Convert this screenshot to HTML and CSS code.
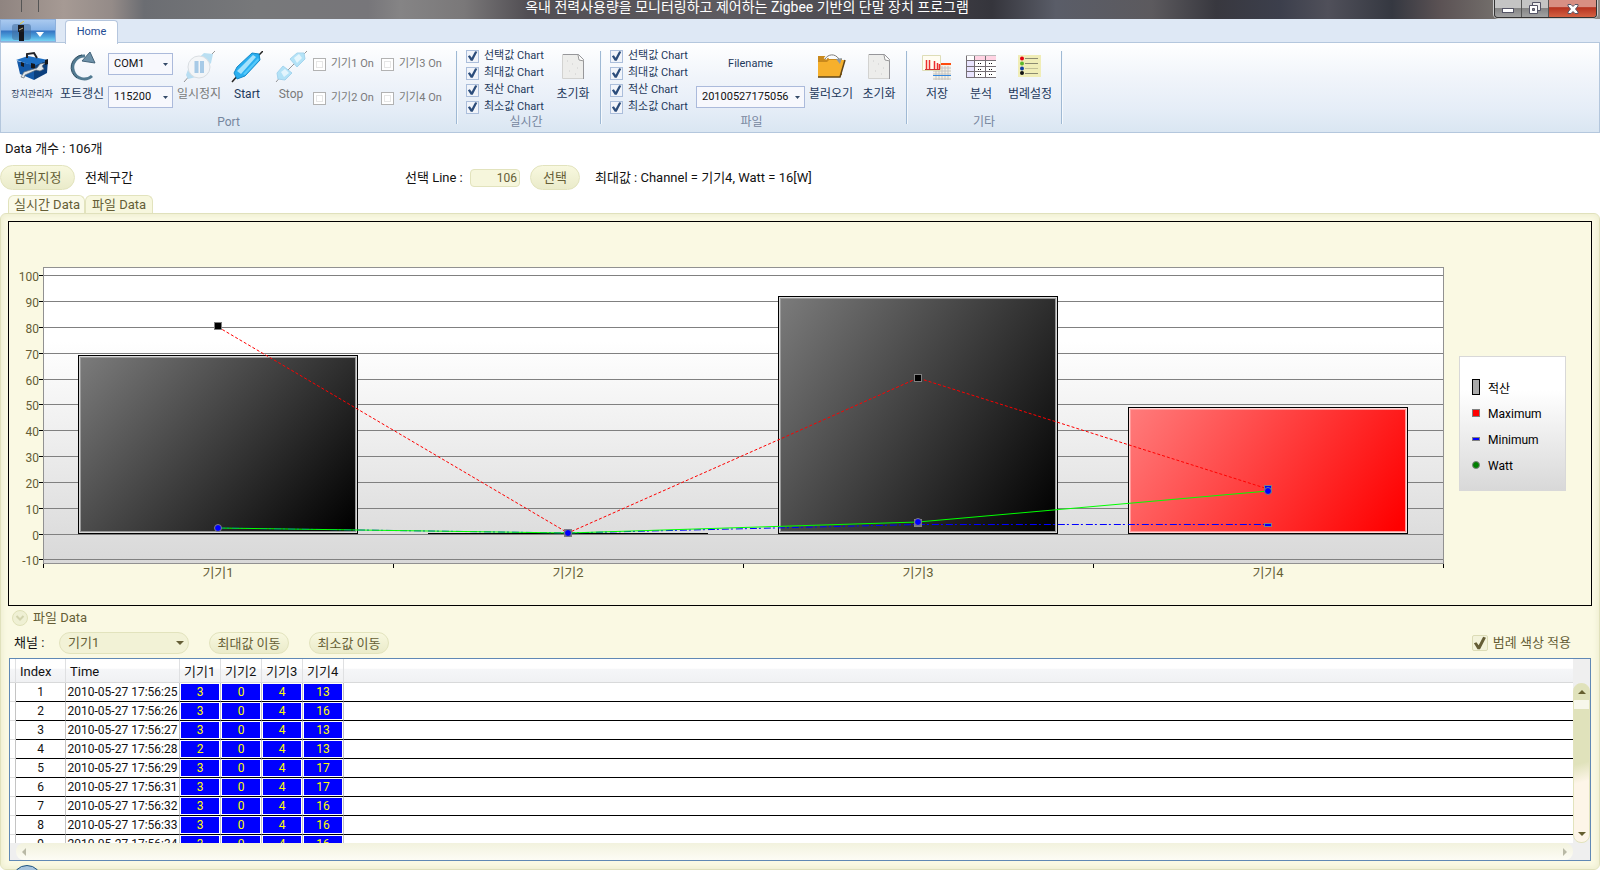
FILE: index.html
```html
<!DOCTYPE html>
<html lang="ko">
<head>
<meta charset="utf-8">
<title>옥내 전력사용량을 모니터링하고 제어하는 Zigbee 기반의 단말 장치 프로그램</title>
<link rel="stylesheet" href="styles.css">
</head>
<body>
<header class="titlebar">
  <span class="title-mark"></span>
  <h1 class="title">옥내 전력사용량을 모니터링하고 제어하는 Zigbee 기반의 단말 장치 프로그램</h1>
  <div class="win-buttons">
    <button class="win-btn" aria-label="최소화"><svg width="12" height="12"><rect x=".5" y="5.5" width="11" height="4" fill="#fff" stroke="#555566"/></svg></button>
    <button class="win-btn" aria-label="이전 크기로"><svg width="12" height="13"><path d="M3.500.5h8v8h-8z" fill="#eee" stroke="#555566"/><path d="M.5 3.500h8v8h-8z" fill="#fff" stroke="#555566"/><path d="M3.500 6.500h2v2h-2z" fill="#888" stroke="#555566"/></svg></button>
    <button class="win-btn win-close" aria-label="닫기"><svg width="12" height="12"><path d="M1 1.500h3l2 2 2-2h3v1.500L8.500 6l2.500 3v1.500H8l-2-2-2 2H1V9l2.500-3L1 3z" fill="#fff" stroke="#555566"/></svg></button>
  </div>
</header>

<nav class="tabstrip">
  <button class="app-btn" aria-label="응용 프로그램 메뉴">
    <svg width="19" height="20"><rect y="3" width="19" height="16" rx="3" fill="#456f9f" opacity=".55"/><path d="M8 3l4-3" stroke="#e3c93e"/><rect x="6" y="4" width="6" height="7" fill="#1c1c20"/><path d="M7 9l4-2" stroke="#b9b184"/><rect x="7" y="11" width="5" height="9" fill="#15151b"/></svg>
    <svg class="app-arrow" width="8" height="5"><path d="M0 0h8L4 5z" fill="#fff"/></svg>
  </button>
  <button class="home-tab">Home</button>
</nav>

<section class="ribbon">
  <div class="group">
    <div class="items">
      <button class="rb w50"><svg class="ico" viewBox="0 0 32 32"><path d="M1 10l17 4v15L4 23z" fill="#1459a8"/><path d="M18 14l14-5-1 13-13 7z" fill="#0b3f7d"/><path d="M0 9l12-4 20 4-14 6z" fill="#1d6fc4"/><path d="M11 7V3l7-1 3 5" fill="none" stroke="#202228" stroke-width="2"/><path d="M5 11l3 1v4l-3-1zM15 12l4 1v5l-4-1zM29 9l3-1v5l-3 1z" fill="#15171c"/><path d="M5 26l3-5 13-4 3-4 5-1-3 3 2 3-4 2-4-1-11 5-1 3z" fill="#dfe5ea" stroke="#66717c" stroke-width=".7"/></svg><span class="small">장치관리자</span></button>
      <button class="rb w50"><svg class="ico" viewBox="0 0 32 32"><path d="M19 5A11.500 11.500 0 1 0 26 25" fill="none" stroke="#527a91" stroke-width="3"/><path d="M16 4A12.500 12.500 0 0 0 11 27" fill="none" stroke="#2e4c60" stroke-width="1"/><path d="M24 1l5 11-13-2z" fill="#6d91a8" stroke="#44647a"/></svg><span>포트갱신</span></button>
      <div class="combos w65">
        <select aria-label="포트"><option>COM1</option></select>
        <select aria-label="통신 속도"><option>115200</option></select>
      </div>
      <button class="rb w50 off" disabled><svg class="ico" viewBox="0 0 32 32"><path d="M1 31l7-8M25 7l7-7" stroke="#777"/><path d="M3 24l3-8L21 2l9 1-2 9-15 14-8 2z" fill="#a5d6ef"/><circle cx="16" cy="16" r="11" fill="#f3f5f7" stroke="#cfd5da"/><path d="M13.500 10v12M19 10v12" stroke="#8dbbe0" stroke-width="4"/></svg><span>일시정지</span></button>
      <button class="rb w46"><svg class="ico" viewBox="0 0 32 32"><path d="M1 31l7-8M25 7l7-7" stroke="#222" stroke-width="1.500"/><path d="M3 22l3-6L21 2l7 1 1 6L14 25l-8 3z" fill="#2aaff0" stroke="#168ac9"/><path d="M6 20L22 4l3 2L10 23z" fill="#a5e2fc"/><path d="M12 23L27 7l1 2-14 15z" fill="#55c9fa"/></svg><span>Start</span></button>
      <button class="rb w42 off" disabled><svg class="ico" viewBox="0 0 32 32"><path d="M1 31l7-8M12 20l8-8M25 7l7-7" stroke="#777"/><path d="M15 8l7-6h7l1 6-8 8zM2 22l6-7 9 7-7 7-7-1z" fill="#9edcf6" stroke="#8bc9e9"/><path d="M19 7l5-4 3 4-5 5zM6 21l4-3 4 4-5 4z" fill="#dff5fe"/></svg><span>Stop</span></button>
      <div class="checks-grid">
        <label class="chk off"><input type="checkbox" disabled>기기1 On</label>
        <label class="chk off"><input type="checkbox" disabled>기기3 On</label>
        <label class="chk off"><input type="checkbox" disabled>기기2 On</label>
        <label class="chk off"><input type="checkbox" disabled>기기4 On</label>
      </div>
    </div>
    <h2 class="caption">Port</h2>
  </div>
  <div class="group group-live">
    <div class="items">
      <div class="checks">
        <label class="chk"><input type="checkbox" checked>선택값 Chart</label>
        <label class="chk"><input type="checkbox" checked>최대값 Chart</label>
        <label class="chk"><input type="checkbox" checked>적산 Chart</label>
        <label class="chk"><input type="checkbox" checked>최소값 Chart</label>
      </div>
      <button class="rb w44"><svg class="ico" viewBox="0 0 32 32"><path d="M5.500 3.500h16l5 5v19h-21z" fill="#ededeb" stroke="#d2d2d0"/><path d="M6 3.500h15.500l5 5V28" fill="none" stroke="#96969a"/><path d="M21 4l1 5 5 1" fill="#fff" stroke="#999"/><path d="M10 10h1M15 13h1M20 17h1M12 20h1M18 23h1" stroke="#ccc"/></svg><span>초기화</span></button>
    </div>
    <h2 class="caption">실시간</h2>
  </div>
  <div class="group group-file">
    <div class="items">
      <div class="checks">
        <label class="chk"><input type="checkbox" checked>선택값 Chart</label>
        <label class="chk"><input type="checkbox" checked>최대값 Chart</label>
        <label class="chk"><input type="checkbox" checked>적산 Chart</label>
        <label class="chk"><input type="checkbox" checked>최소값 Chart</label>
      </div>
      <div class="combos w109">
        <label class="file-label" for="filename">Filename</label>
        <select id="filename"><option>20100527175056</option></select>
      </div>
      <button class="rb w50"><svg class="ico" viewBox="0 0 32 32"><path d="M3 5h9l2 3h13v16H3z" fill="#c9891c"/><path d="M10 8c3-5 10-6 14 0" fill="none" stroke="#fff" stroke-width="3"/><path d="M10 8c3-5 10-6 14 0" fill="none" stroke="#777"/><path d="M3 11h9l2-2h16l-5 17H3z" fill="#f6b02c"/><path d="M30 9l-5 17H3" fill="none" stroke="#5f4519" stroke-width="1.500"/><path d="M21 8l6-1-2 6z" fill="#8d99a3"/></svg><span>불러오기</span></button>
      <button class="rb w46"><svg class="ico" viewBox="0 0 32 32"><path d="M5.500 3.500h16l5 5v19h-21z" fill="#ededeb" stroke="#d2d2d0"/><path d="M6 3.500h15.500l5 5V28" fill="none" stroke="#96969a"/><path d="M21 4l1 5 5 1" fill="#fff" stroke="#999"/><path d="M10 10h1M15 13h1M20 17h1M12 20h1M18 23h1" stroke="#ccc"/></svg><span>초기화</span></button>
    </div>
    <h2 class="caption">파일</h2>
  </div>
  <div class="group">
    <div class="items etc">
      <button class="rb w44"><svg class="ico" viewBox="0 0 32 32"><path d="M12 12h18v17H12z" fill="#f4f1e5"/><path d="M12 12h18v2H12z" fill="#ff4b0b"/><path d="M12 17h18M12 20h18M12 23h18M12 28h18M15 15v14M18 15v14M21 15v14M24 15v14M27 15v14" stroke="#c4c4c4"/><path d="M12 24.500h18" stroke="#3388e0"/><path d="M1.500 4.500h18v15h-18z" fill="#fffdf2" stroke="#deddb7"/><path d="M5.500 9v9M8.500 9v9M13.500 10v8M16.500 12v6M18.500 13v5" stroke="#ed2e2e" stroke-width="1.500"/><path d="M4 18.500h15" stroke="#c33"/></svg><span>저장</span></button>
      <button class="rb w44"><svg class="ico" viewBox="0 0 32 32"><path d="M1 4h30v23H1z" fill="#fff"/><path d="M9 4h22v5H9z" fill="#ffd3e3"/><path d="M1 9h8v17H1z" fill="#e9e4ff"/><path d="M1.500 4v23M9.500 4v23M20.500 4v23M1 9.500h30M1 15.500h30M1 20.500h30M1 26.500h30" stroke="#756f75"/><path d="M1 4.500h30" stroke="#bbb"/><path d="M13 12.500h4M24 12.500h4M13 18.500h4M24 18.500h4M13 23.500h4M24 23.500h4" stroke="#111" stroke-dasharray="1 1"/></svg><span>분석</span></button>
      <button class="rb w54"><svg class="ico" viewBox="0 0 32 32"><path d="M4 4h23v22H4z" fill="#f0edb7"/><path d="M11 7.500h13M11 12.500h13M11 22.500h13" stroke="#8c8b71"/><path d="M11 17.500h13" stroke="#c4c296"/><circle cx="8" cy="7.500" r="2" fill="#e30010"/><circle cx="8" cy="12.500" r="2" fill="#5eb82b"/><circle cx="8" cy="17.500" r="2" fill="#1442a5"/><circle cx="8" cy="22" r="2" fill="#111"/></svg><span>범례설정</span></button>
    </div>
    <h2 class="caption">기타</h2>
  </div>
</section>

<main class="main">
  <p class="count">Data 개수 : 106개</p>
  <div class="range-row">
    <button class="pill pill-range">범위지정</button>
    <span class="range-text">전체구간</span>
    <label for="line">선택 Line :</label>
    <input id="line" class="line-input" type="text" value="106">
    <button class="pill pill-select">선택</button>
    <span>최대값 : Channel = 기기4, Watt = 16[W]</span>
  </div>
  <div class="tabs">
    <button class="tab">실시간 Data</button>
    <button class="tab active">파일 Data</button>
  </div>
  <section class="panel">
    <svg class="chart" viewBox="9 222 1582 383" role="img" aria-label="기기별 전력 차트">
      <defs>
        <linearGradient id="plot" x1="0" y1="0" x2="0" y2="1"><stop offset=".25" stop-color="#fff"/><stop offset="1" stop-color="#d8d8d8"/></linearGradient>
        <linearGradient id="dark" x1="0" y1="0" x2="1.16" y2=".7"><stop offset="0" stop-color="#7b7b7b"/><stop offset="1" stop-color="#000"/></linearGradient>
        <linearGradient id="red" x1="0" y1="0" x2="1.16" y2=".36"><stop offset="0" stop-color="#ff7b7b"/><stop offset="1" stop-color="#f00"/></linearGradient>
      </defs>
      <rect x="43.5" y="267.5" width="1400" height="296" fill="url(#plot)" stroke="#919191"/>
      <path d="M44 275.500H1443M44 301.500H1443M44 327.500H1443M44 353.500H1443M44 379.500H1443M44 404.500H1443M44 430.500H1443M44 456.500H1443M44 482.500H1443M44 508.500H1443M44 534.500H1443M44 559.500H1443" stroke="#808080"/>
      <path d="M39 275.500h4M39 301.500h4M39 327.500h4M39 353.500h4M39 379.500h4M39 404.500h4M39 430.500h4M39 456.500h4M39 482.500h4M39 508.500h4M39 534.500h4M39 559.500h4M43.500 564v4M393.500 564v4M743.500 564v4M1093.500 564v4M1443.500 564v4" stroke="#000"/>
      <g class="axis-y">
        <text x="39" y="281">100</text><text x="39" y="307">90</text><text x="39" y="333">80</text><text x="39" y="359">70</text><text x="39" y="385">60</text><text x="39" y="410">50</text><text x="39" y="436">40</text><text x="39" y="462">30</text><text x="39" y="488">20</text><text x="39" y="514">10</text><text x="39" y="540">0</text><text x="39" y="565">-10</text>
      </g>
      <g class="axis-x">
        <text x="218" y="577">기기1</text><text x="568" y="577">기기2</text><text x="918" y="577">기기3</text><text x="1268" y="577">기기4</text>
      </g>
      <g stroke="#000">
        <rect x="78.5" y="355.5" width="279" height="178" fill="#d8d8d8"/>
        <rect x="778.5" y="296.5" width="279" height="237" fill="#d8d8d8"/>
        <rect x="1128.5" y="407.5" width="279" height="126" fill="#ffd8d8"/>
        <path d="M428 533.500h280"/>
      </g>
      <rect x="80.5" y="357.5" width="275" height="174" fill="url(#dark)" stroke="#999"/>
      <rect x="780.5" y="298.5" width="275" height="233" fill="url(#dark)" stroke="#999"/>
      <rect x="1130.5" y="409.5" width="275" height="122" fill="url(#red)" stroke="#ff9a9a"/>
      <path d="M218 327L568 533 918 378 1268 489" fill="none" stroke="#f00" stroke-dasharray="3 2"/>
      <path d="M218 528L568 533 918 524.500H1268" fill="none" stroke="#00f" stroke-dasharray="7 2 2 3"/>
      <path d="M218 528L568 533 918 522 1268 491" fill="none" stroke="#0f0"/>
      <g stroke="#808080">
        <rect x="214.500" y="322.500" width="7" height="7" fill="#000"/>
        <rect x="914.500" y="374.500" width="7" height="7" fill="#000"/>
        <rect x="564.500" y="529.500" width="7" height="7" fill="#555"/>
        <rect x="914.500" y="519.500" width="7" height="7" fill="#777"/>
        <rect x="1264.500" y="485.500" width="7" height="7" fill="#00f"/>
        <rect x="1264.500" y="523.500" width="7" height="3" fill="#00f"/>
        <circle cx="218" cy="528" r="3.500" fill="#00f"/>
        <circle cx="568" cy="533" r="3.500" fill="#00f"/>
        <circle cx="918" cy="522" r="3.500" fill="#00f"/>
        <circle cx="1268" cy="491" r="3.500" fill="#00f"/>
      </g>
      <rect x="1459.500" y="356.500" width="106" height="134" fill="url(#plot)" stroke="#d8d8d8"/>
      <rect x="1472.500" y="379.500" width="7" height="15" fill="#aaa" stroke="#000"/>
      <g stroke="#808080">
        <rect x="1472.500" y="409.500" width="7" height="7" fill="#f00"/>
        <rect x="1472.500" y="437.500" width="7" height="3" fill="#00f"/>
        <circle cx="1476" cy="465" r="3.500" fill="#008000"/>
      </g>
      <g class="legend"><text x="1488" y="393">적산</text><text x="1488" y="418">Maximum</text><text x="1488" y="444">Minimum</text><text x="1488" y="470">Watt</text></g>
    </svg>

    <button class="expander"><svg width="16" height="16"><circle cx="8" cy="8" r="7.500" fill="#eff0d4" stroke="#dfe0b8"/><path d="M4.500 6l3.500 3.500L11.500 6" fill="none" stroke="#d2d3ad" stroke-width="2"/></svg>파일 Data</button>

    <div class="controls">
      <label for="channel">채널 :</label>
      <select id="channel" class="channel"><option>기기1</option></select>
      <button class="pill pill-move">최대값 이동</button>
      <button class="pill pill-move">최소값 이동</button>
      <label class="legend-check"><input type="checkbox" checked>범례 색상 적용</label>
    </div>

    <div class="grid">
      <div class="viewport">
        <table class="data">
          <colgroup><col class="c-head"><col class="c-index"><col class="c-time"><col class="c-dev"><col class="c-dev"><col class="c-dev"><col class="c-dev"><col></colgroup>
          <thead><tr><th></th><th>Index</th><th>Time</th><th>기기1</th><th>기기2</th><th>기기3</th><th>기기4</th><th></th></tr></thead>
          <tbody>
            <tr><td></td><td>1</td><td>2010-05-27 17:56:25</td><td>3</td><td>0</td><td>4</td><td>13</td><td></td></tr>
            <tr><td></td><td>2</td><td>2010-05-27 17:56:26</td><td>3</td><td>0</td><td>4</td><td>16</td><td></td></tr>
            <tr><td></td><td>3</td><td>2010-05-27 17:56:27</td><td>3</td><td>0</td><td>4</td><td>13</td><td></td></tr>
            <tr><td></td><td>4</td><td>2010-05-27 17:56:28</td><td>2</td><td>0</td><td>4</td><td>13</td><td></td></tr>
            <tr><td></td><td>5</td><td>2010-05-27 17:56:29</td><td>3</td><td>0</td><td>4</td><td>17</td><td></td></tr>
            <tr><td></td><td>6</td><td>2010-05-27 17:56:31</td><td>3</td><td>0</td><td>4</td><td>17</td><td></td></tr>
            <tr><td></td><td>7</td><td>2010-05-27 17:56:32</td><td>3</td><td>0</td><td>4</td><td>16</td><td></td></tr>
            <tr><td></td><td>8</td><td>2010-05-27 17:56:33</td><td>3</td><td>0</td><td>4</td><td>16</td><td></td></tr>
            <tr><td></td><td>9</td><td>2010-05-27 17:56:34</td><td>3</td><td>0</td><td>4</td><td>16</td><td></td></tr>
          </tbody>
        </table>
      </div>
      <div class="vscroll">
        <button class="vs-up" aria-label="위로"><svg width="8" height="4"><path d="M0 4h8L4 0z" fill="#655e2f"/></svg></button>
        <span class="vs-thumb"></span>
        <button class="vs-down" aria-label="아래로"><svg width="8" height="4"><path d="M0 0h8L4 4z" fill="#655e2f"/></svg></button>
      </div>
      <div class="hscroll">
        <button aria-label="왼쪽으로"><svg width="4" height="8"><path d="M4 0v8L0 4z" fill="#b9b9a6"/></svg></button>
        <button aria-label="오른쪽으로"><svg width="4" height="8"><path d="M0 0v8l4-4z" fill="#b9b9a6"/></svg></button>
      </div>
    </div>
  </section>
</main>
<span class="start-orb"></span>
</body>
</html>
```
FILE: styles.css
```css
* { box-sizing: border-box; }
html, body { height: 100%; }
body {
  margin: 0;
  display: flex;
  flex-direction: column;
  overflow: hidden;
  position: relative;
  background: #fff;
  color: #111;
  font: 13px/18px Roboto, "Noto Sans CJK KR", sans-serif;
}
button, select, input { font: inherit; color: inherit; }
button { border: 0; padding: 0; background: none; }
h1, h2, p { margin: 0; font-weight: 400; }

/* title bar */
.titlebar {
  height: 19px;
  flex: none;
  display: flex;
  position: relative;
  background: linear-gradient(90deg, #8f8480 0, #a69a94 4%, #948b88 7%, #6b6d72 9%, #77787a 16%, #77767a 23%, #858485 25%, #7a7879 29%, #514e53 33%, #5d5b60 45%, #46444b 56%, #35353c 62%, #5a5d68 66%, #5c5a5e 72%, #38383f 76%, #3c3f4c 80%, #50505a 83%, #353841 87%, #5b5254 90%, #77736f 94%, #8f8d89 100%);
}
.title-mark { position: absolute; left: 21px; width: 18px; height: 12px; border: solid #555; border-width: 0 1px; }
.title { flex: 1; color: #fff; font-size: 14px; line-height: 14px; text-align: center; white-space: nowrap; }
.win-buttons {
  display: flex;
  height: 18px;
  margin-right: 3px;
  border: 1px solid #333;
  border-top: 0;
  border-radius: 0 0 4px 4px;
  box-shadow: 0 0 0 1px #ccc;
  overflow: hidden;
}
.win-btn { width: 27px; display: grid; place-items: center; border-right: 1px solid #555; background: linear-gradient(#c4c4c4 0 45%, #858585 50%, #a2a2a2); }
.win-close { width: 47px; border: 0; background: linear-gradient(#d88f83 0 40%, #b63320 45%, #d56141); }

/* ribbon */
.tabstrip { height: 23px; flex: none; display: flex; gap: 9px; background: #dee8f5; }
.app-btn {
  width: 56px;
  display: flex;
  align-items: center;
  justify-content: center;
  gap: 5px;
  border: 1px solid #8db0dc;
  background: linear-gradient(#a9c9ef 0, #86b2e6 48%, #3473c2 52%, #4ea5de 80%, #76d4f3);
}
.app-arrow { margin-top: 8px; }
.home-tab {
  width: 53px;
  height: 24px;
  align-self: flex-end;
  margin-bottom: -2px;
  padding-bottom: 2px;
  z-index: 1;
  border: 1px solid #b5c6de;
  border-bottom: 0;
  border-radius: 4px 4px 0 0;
  background: #fff;
  color: #1f4c94;
  font-size: 11px;
}
.ribbon {
  flex: none;
  display: flex;
  height: 91px;
  border: 1px solid #b4c7dd;
  background: linear-gradient(#fff, #f0f4fa 40%, #e5edf7 75%, #dae6f2);
  color: #1e395b;
}
.group { display: flex; flex-direction: column; margin: 8px 0; padding-left: 6px; border-right: 1px solid #9fb9d4; box-shadow: 1px 0 #f5f9fd; }
.group-live { padding-right: 5px; }
.group-file { padding-right: 4px; }
.items { display: flex; flex: none; height: 64px; }
.etc { padding: 0 4px 0 2px; }
.caption { padding-right: 6px; text-align: center; color: #76869e; font-size: 12px; line-height: 14px; }
.rb { display: flex; flex-direction: column; align-items: center; gap: 3px; font-size: 12px; line-height: 16px; white-space: nowrap; }
.rb .small { font-size: 9px; }
.ico { width: 32px; height: 32px; flex: none; }
.off { color: #7a7a7a; }
.rb.off .ico { opacity: .75; }
.w42 { width: 42px; }
.w44 { width: 44px; }
.w46 { width: 46px; }
.w50 { width: 50px; }
.w54 { width: 54px; }
.w65 { width: 65px; }
.w109 { width: 109px; }
.combos { display: grid; grid-template-rows: 22px 22px; row-gap: 11px; margin: 2px 1px 0; align-content: start; font-size: 11px; text-align: center; }
.file-label { align-self: center; }
.combos select {
  appearance: none;
  width: 100%;
  padding: 0 5px;
  border: 1px solid #abbadb;
  border-radius: 0;
  color: #111;
  background: #f7f8fd url("data:image/svg+xml,%3Csvg xmlns='http://www.w3.org/2000/svg' width='5' height='3'%3E%3Cpath d='M0 0h5L2.500 3z' fill='%23344a68'/%3E%3C/svg%3E") no-repeat right 4px center;
}
.checks-grid { display: grid; grid-template-columns: 68px 68px; grid-template-rows: 16px 16px; row-gap: 18px; padding: 5px 7px 0 1px; align-content: start; }
.checks { width: 85px; display: grid; grid-auto-rows: 16px; align-content: start; margin: -3px 0 0 3px; row-gap: 1px; }
.chk { display: flex; align-items: center; gap: 5px; font-size: 11px; line-height: 16px; white-space: nowrap; }
.chk input {
  appearance: none;
  flex: none;
  width: 13px;
  height: 13px;
  margin: 0;
  border: 1px solid #abbedb;
  background: #f1f4fa;
}
.chk input:disabled { border-color: #b2b2b2; background: #fff; box-shadow: inset 0 0 0 2px #fff, inset 0 0 0 3px #e6e6e6; }
.chk input:checked::before, .legend-check input::before {
  content: "";
  display: block;
  height: 100%;
  background: #2c4d7b;
  clip-path: polygon(8% 52%, 26% 44%, 42% 66%, 74% 6%, 94% 12%, 52% 94%, 34% 94%);
}

/* workspace */
.main { flex: 1; min-height: 0; display: flex; flex-direction: column; }
.count { padding: 7px 5px 5px; }
.range-row { display: flex; align-items: center; height: 25px; margin-top: 2px; white-space: nowrap; }
.range-text { width: 320px; margin-left: 10px; }
.pill {
  height: 25px;
  padding-top: 1px;
  border: 1px solid #e2e3bd;
  border-radius: 13px;
  background: linear-gradient(#f8f8df, #eaebca);
  color: #655e36;
  white-space: nowrap;
}
.pill-range { width: 75px; }
.pill-select { width: 50px; margin: 0 15px 0 10px; }
.range-row label { width: 65px; }
.line-input { width: 50px; height: 18px; padding: 0 2px; border: 1px solid #e2e3bd; border-radius: 4px; background: #f6f6dc; color: #655e36; font-size: 12px; text-align: right; }
.tabs { display: flex; padding: 5px 8px 0; }
.tab {
  height: 18px;
  padding: 0 4px 0 5px;
  border: 1px solid #e2e3bd;
  border-bottom: 0;
  border-radius: 6px 6px 0 0;
  background: #fafae9;
  color: #655e36;
  white-space: nowrap;
}
.tab.active { height: 19px; margin-bottom: -1px; padding: 0 6px; background: #f7f7de; }
.panel {
  flex: 1;
  min-height: 0;
  display: flex;
  flex-direction: column;
  padding: 7px 7px 8px;
  border: 1px solid #e0e1bc;
  border-radius: 6px;
  background: #faf9e3;
  box-shadow: inset 0 0 5px 2px #efefd2;
}
.chart { display: block; flex: none; width: 100%; height: auto; border: 1px solid #000; }
.chart text { font-size: 12px; }
.axis-y, .axis-x { fill: #655e36; }
.axis-y { text-anchor: end; }
.chart .axis-x text { font-size: 13px; text-anchor: middle; }
.expander { display: flex; align-items: center; align-self: flex-start; gap: 5px; height: 16px; margin: 4px 0 0 4px; color: #655e36; }
.controls { display: flex; align-items: center; flex: none; height: 22px; margin: 6px 21px 4px 6px; }
.controls label:first-child { width: 45px; }
.channel {
  appearance: none;
  width: 130px;
  height: 22px;
  margin-right: 20px;
  padding: 0 8px;
  border: 1px solid #e2e3bd;
  border-radius: 11px;
  color: #655e36;
  background: #f2f2d6 url("data:image/svg+xml,%3Csvg xmlns='http://www.w3.org/2000/svg' width='8' height='4'%3E%3Cpath d='M0 0h8L4 4z' fill='%23655e36'/%3E%3C/svg%3E") no-repeat right 4px center;
}
.pill-move { width: 80px; height: 22px; margin-right: 20px; }
.legend-check { display: flex; align-items: center; gap: 5px; margin-left: auto; color: #655e36; }
.legend-check input { appearance: none; width: 16px; height: 16px; margin: 0; border: 1px solid #dcdcb6; border-radius: 2px; background: #f3f3da; }
.legend-check input::before { background: #655e36; }

/* data grid */
.grid {
  flex: 1;
  min-height: 0;
  display: grid;
  grid-template-columns: minmax(0, 1fr) 17px;
  grid-template-rows: minmax(0, 1fr) 17px;
  margin: 0 1px;
  border: 1px solid #6089b5;
  background: #efefef;
}
.viewport { overflow: hidden; background: #fff; }
.data { width: 100%; table-layout: fixed; border-collapse: separate; border-spacing: 0; }
.c-head { width: 6px; }
.c-index { width: 50px; }
.c-time { width: 114px; }
.c-dev { width: 41px; }
.data th {
  height: 24px;
  padding: 2px 4px 0;
  border-right: 1px solid #dfe0e2;
  border-bottom: 1px solid #d8d9da;
  background: linear-gradient(#fff 0 40%, #f5f6f8 45%, #f0f1f3);
  font-weight: 400;
  text-align: left;
  white-space: nowrap;
}
.data td { height: 19px; padding: 0; border-right: 1px solid #c4c4c4; border-bottom: 1px solid #000; font-size: 12px; line-height: 16px; text-align: center; white-space: nowrap; }
.data td:first-child { border-bottom-color: #ddd; }
.data td:last-child, .data th:last-child { border-right: 0; }
.data td:nth-child(n+4):nth-child(-n+7) { padding: 1px; background: #00f content-box; color: #ff0; }
.vscroll {
  display: flex;
  flex-direction: column;
  margin-top: 24px;
  border: 1px solid #e2e3bd;
  border-radius: 8px;
  overflow: hidden;
  background: linear-gradient(165deg, #e0e2bb 50%, #fdf5e8 62%);
}
.vs-up, .vs-down { display: grid; place-items: center; height: 16px; }
.vs-down { margin-top: auto; }
.vs-thumb { height: 9px; background: #f7f7eb; }
.hscroll { display: flex; justify-content: space-between; align-items: center; margin-left: 6px; padding: 0 6px; border-radius: 8px; background: linear-gradient(#f2f2de, #fdfcf5); }
.start-orb { position: absolute; left: 12px; top: calc(100% - 5px); width: 30px; height: 30px; border: 1px solid #1f5580; border-radius: 50%; background: #a8c4dc; }
```
